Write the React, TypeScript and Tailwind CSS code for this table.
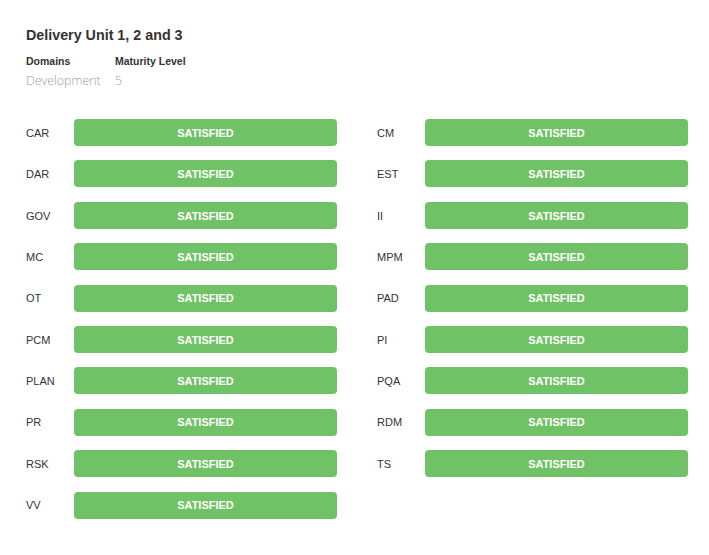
const left = ['CAR', 'DAR', 'GOV', 'MC', 'OT', 'PCM', 'PLAN', 'PR', 'RSK', 'VV'];
const right = ['CM', 'EST', 'II', 'MPM', 'PAD', 'PI', 'PQA', 'RDM', 'TS'];

function Row({ name }: { name: string }) {
  return (
    <div className="flex items-center h-[27px]">
      <span className="w-[48px] pt-[1px] text-[11px] text-[#333]">{name}</span>
      <div className="flex-1 h-[27px] pt-[1px] rounded-[4px] bg-[#70c266] flex items-center justify-center text-[11px] font-bold text-white">
        SATISFIED
      </div>
    </div>
  );
}

export default function App() {
  return (
    <div className="w-[709px] h-[555px] bg-white pt-[26px] pl-[26px] pr-[21px] font-['Liberation_Sans',Arial,sans-serif]">
      <h1 className="text-[14.3px] font-bold text-[#333] leading-[18px]">Delivery Unit 1, 2 and 3</h1>
      <div className="mt-[10px] flex gap-[14px]">
        <div className="w-[75px]">
          <div className="text-[10.5px] font-bold text-[#333] leading-[14px]">Domains</div>
          <div className="mt-[5px] text-[12.4px] font-light text-[#9c9c9c] font-['Open_Sans',sans-serif] leading-[16px]">Development</div>
        </div>
        <div>
          <div className="text-[10.5px] font-bold text-[#333] leading-[14px]">Maturity Level</div>
          <div className="mt-[5px] text-[12.4px] font-light text-[#9c9c9c] font-['Open_Sans',sans-serif] leading-[16px]">5</div>
        </div>
      </div>
      <div className="mt-[30px] grid grid-cols-2 gap-x-[40px]">
        <div className="flex flex-col gap-[14.4px]">
          {left.map((n) => (
            <Row key={n} name={n} />
          ))}
        </div>
        <div className="flex flex-col gap-[14.4px]">
          {right.map((n) => (
            <Row key={n} name={n} />
          ))}
        </div>
      </div>
    </div>
  );
}
